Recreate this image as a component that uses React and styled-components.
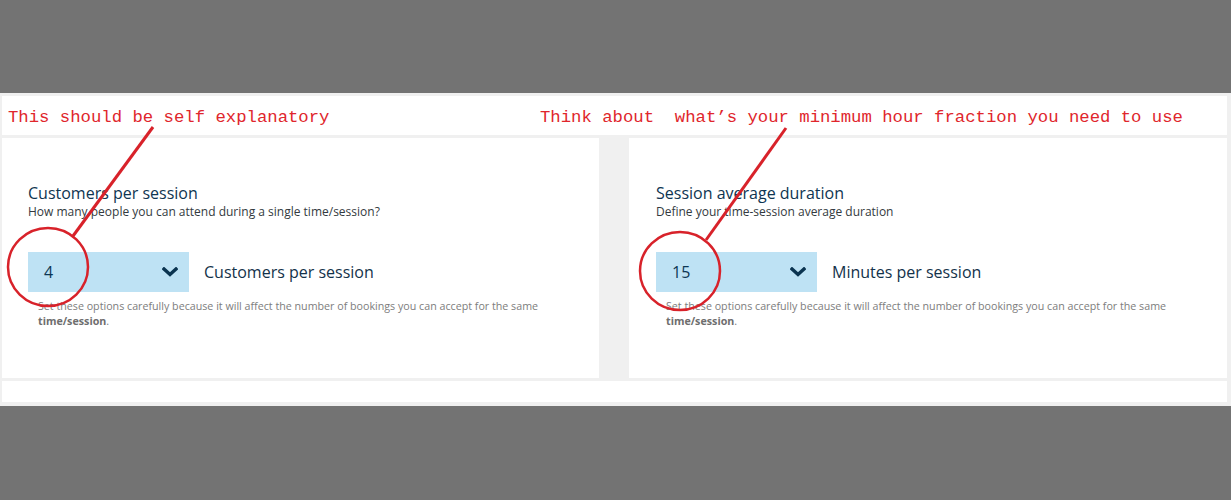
import React from "react";
import styled, { createGlobalStyle } from "styled-components";

const GlobalStyle = createGlobalStyle`
  html, body { margin: 0; padding: 0; }
  body {
    background: #737373;
    font-family: "Open Sans", "Noto Sans", sans-serif;
    -webkit-font-smoothing: antialiased;
  }
`;

const Page = styled.div`
  position: relative;
  width: 1231px;
  height: 500px;
  padding-top: 93px;
  box-sizing: border-box;
`;

const Frame = styled.div`
  background: #f0f0f0;
  padding: 3px 4px 4px 2px;
  display: flex;
  flex-direction: column;
  gap: 3px;
`;

const NoteBar = styled.div`
  background: #ffffff;
  height: 39px;
  display: grid;
  grid-template-columns: 532px 1fr;
  align-items: center;
  padding-left: 6px;
  padding-top: 3px;
  box-sizing: border-box;
`;

const Note = styled.span`
  font-family: "Liberation Mono", "Courier New", monospace;
  font-size: 17.3px;
  color: #e0262c;
  white-space: pre;
`;

const Panels = styled.div`
  display: grid;
  grid-template-columns: 597px 1fr;
  gap: 30px;
  height: 240px;
`;

const Panel = styled.section`
  background: #ffffff;
  padding: 45px 0 0 ${(p) => p.$inset}px;
  box-sizing: border-box;
`;

const Title = styled.h3`
  margin: 0;
  font-size: 16px;
  line-height: 20px;
  font-weight: 400;
  color: #0e3551;
`;

const Subtitle = styled.p`
  margin: 1px 0 0;
  font-size: 12px;
  line-height: 16px;
  color: #333a40;
`;

const Row = styled.div`
  display: flex;
  align-items: center;
  gap: 15px;
  margin-top: 32px;
`;

const Select = styled.div`
  width: 161px;
  height: 40px;
  background: #bee2f4;
  display: flex;
  align-items: center;
  justify-content: space-between;
  padding: 0 11px 0 16px;
  box-sizing: border-box;
  font-size: 16px;
  color: #0d3754;
`;

const Chevron = styled.svg`
  width: 16px;
  height: 10px;
  display: block;
`;

const Unit = styled.span`
  font-size: 16px;
  color: #13324a;
`;

const Help = styled.p`
  margin: 7px 0 0 10px;
  width: 515px;
  font-size: 10.7px;
  line-height: 15px;
  color: #7d7d7d;
  strong { font-weight: 700; color: #6e6e6e; }
`;

const BottomBar = styled.div`
  background: #ffffff;
  height: 21px;
`;

const Overlay = styled.svg`
  position: absolute;
  top: 0;
  left: 0;
  pointer-events: none;
`;

function Setting({ inset, title, subtitle, value, unit }) {
  return (
    <Panel $inset={inset}>
      <Title>{title}</Title>
      <Subtitle>{subtitle}</Subtitle>
      <Row>
        <Select>
          <span>{value}</span>
          <Chevron viewBox="0 0 16 10">
            <path d="M2 2 L8 7.5 L14 2" fill="none" stroke="#0b3450" strokeWidth="3.4" strokeLinecap="square" />
          </Chevron>
        </Select>
        <Unit>{unit}</Unit>
      </Row>
      <Help>
        Set these options carefully because it will affect the number of bookings you can accept for the same{" "}
        <strong>time/session</strong>.
      </Help>
    </Panel>
  );
}

export default function App() {
  return (
    <>
      <GlobalStyle />
      <Page>
        <Frame>
          <NoteBar>
            <Note>This should be self explanatory</Note>
            <Note>Think about  what’s your minimum hour fraction you need to use</Note>
          </NoteBar>
          <Panels>
            <Setting
              inset={26}
              title="Customers per session"
              subtitle="How many people you can attend during a single time/session?"
              value="4"
              unit="Customers per session"
            />
            <Setting
              inset={27}
              title="Session average duration"
              subtitle="Define your time-session average duration"
              value="15"
              unit="Minutes per session"
            />
          </Panels>
          <BottomBar />
        </Frame>
        <Overlay width="1231" height="500" viewBox="0 0 1231 500">
          <g fill="none" stroke="#d8222a">
            <line x1="153" y1="127" x2="73" y2="236" strokeWidth="3" />
            <ellipse cx="48" cy="267" rx="40" ry="39" strokeWidth="2.5" />
            <line x1="786" y1="128" x2="706" y2="240" strokeWidth="3" />
            <ellipse cx="680" cy="271" rx="40" ry="39" strokeWidth="2.5" />
          </g>
        </Overlay>
      </Page>
    </>
  );
}
